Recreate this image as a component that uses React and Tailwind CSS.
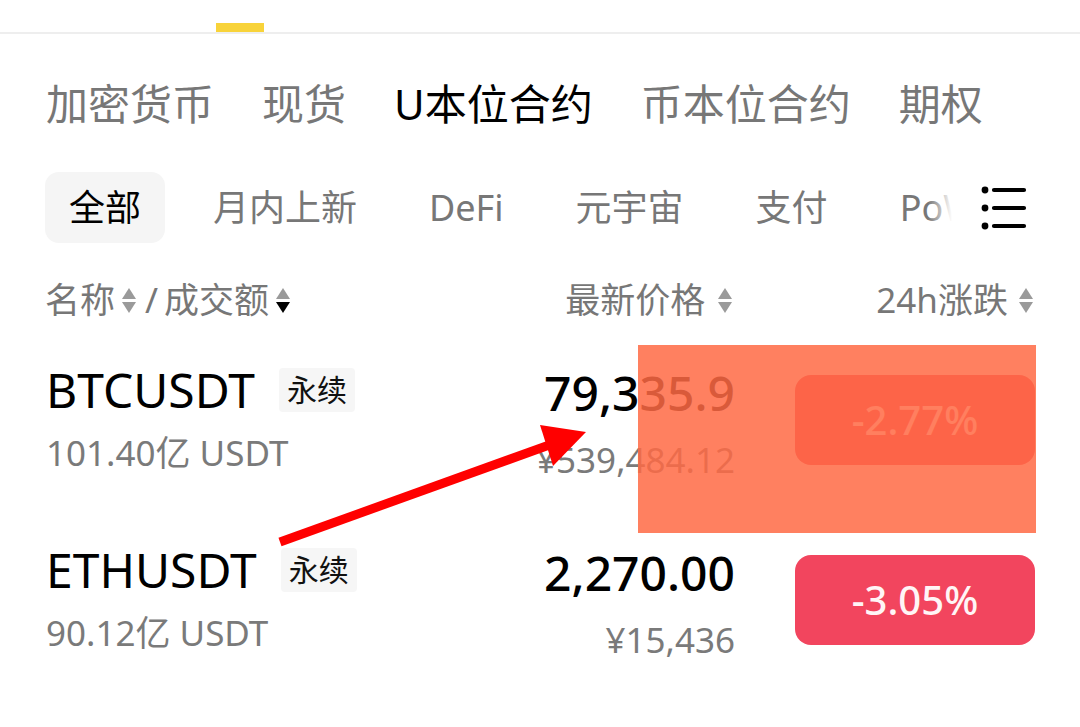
import React from "react";

const FONT = { fontFamily: '"Noto Sans", "Noto Sans CJK SC", sans-serif' };

function SortIcon({ active }) {
  return (
    <svg width="16" height="32" viewBox="0 0 16 32" className="shrink-0">
      <path d="M8 4 L15 15 L1 15 Z" fill="#9a9a9a" />
      <path d="M1 18 L15 18 L8 29 Z" fill={active ? "#000" : "#9a9a9a"} />
    </svg>
  );
}

function MenuIcon() {
  return (
    <svg width="50" height="46" viewBox="0 0 50 46" className="shrink-0">
      <circle cx="5" cy="5" r="3.4" fill="#000" />
      <circle cx="5" cy="23" r="3.4" fill="#000" />
      <circle cx="5" cy="41" r="3.4" fill="#000" />
      <path d="M14 5 H44 M14 23 H44 M14 41 H44" stroke="#000" strokeWidth="4.2" strokeLinecap="round" />
    </svg>
  );
}

function Row({ name, vol, price, cny, change }) {
  return (
    <div className="flex items-center h-[180px] pl-[46px] pr-[45px]">
      <div className="flex-1 flex flex-col pb-[4px]">
        <div className="flex items-center gap-[24px]">
          <span className="text-[48px] leading-[56px] text-black">{name}</span>
          <span className="text-[30px] leading-[44px] px-[8px] bg-[#f6f6f6] rounded-[4px] text-[#111]">永续</span>
        </div>
        <span className="text-[35px] leading-[42px] mt-[14px] text-[#7a7a7a]">{vol}</span>
      </div>
      <div className="flex flex-col items-end pt-[6px]">
        <span className="text-[48px] leading-[56px] font-medium text-black">{price}</span>
        <span className="text-[35px] leading-[42px] mt-[18px] text-[#7a7a7a]">{cny}</span>
      </div>
      <div className="ml-[60px] w-[240px] h-[90px] rounded-[16px] bg-[#f2455e] flex items-center justify-center">
        <span className="text-[40px] font-medium text-[#fff5f6]">{change}</span>
      </div>
    </div>
  );
}

export default function App() {
  const cats = ["月内上新", "DeFi", "元宇宙", "支付", "PoW"];
  return (
    <div className="w-[1080px] h-[727px] bg-white relative overflow-hidden" style={FONT}>
      {/* top indicator */}
      <div className="h-[23px]" />
      <div className="h-[9px] flex">
        <div className="ml-[216px] w-[48px] h-[9px] bg-[#f8d33a]" />
      </div>
      <div className="h-[2px] bg-[#eeeeee]" />

      {/* main tabs */}
      <div className="h-[138px] flex items-center gap-[48px] pl-[46px] text-[42px] text-[#777777]">
        <span>加密货币</span>
        <span>现货</span>
        <span className="text-black">U本位合约</span>
        <span>币本位合约</span>
        <span>期权</span>
      </div>

      {/* categories */}
      <div className="h-[71px] flex items-center pl-[45px] pr-[50px]">
        <div className="flex-1 relative overflow-hidden flex items-center">
          <div className="flex items-center gap-[24px] text-[36px] text-[#777777] whitespace-nowrap">
            <span className="h-[71px] px-[24px] flex items-center bg-[#f5f5f5] rounded-[14px] text-black">全部</span>
            {cats.map((c) => (
              <span key={c} className="px-[24px]">{c}</span>
            ))}
          </div>
          <div className="absolute right-0 top-0 bottom-0 w-[24px] bg-gradient-to-r from-transparent to-white" />
        </div>
        <div className="ml-[28px]">
          <MenuIcon />
        </div>
      </div>

      {/* header */}
      <div className="mt-[27px] h-[60px] flex items-center pl-[45px] pr-[46px] text-[35px] text-[#777777]">
        <div className="flex-1 flex items-center">
          <span>名称</span>
          <span className="ml-[6px]"><SortIcon /></span>
          <span className="ml-[8px] mr-[6px]">/</span>
          <span>成交额</span>
          <span className="ml-[6px]"><SortIcon active /></span>
        </div>
        <div className="flex items-center">
          <span>最新价格</span>
          <span className="ml-[12px]"><SortIcon /></span>
        </div>
        <div className="ml-[143px] flex items-center">
          <span>24h涨跌</span>
          <span className="ml-[10px]"><SortIcon /></span>
        </div>
      </div>

      <Row name="BTCUSDT" vol="101.40亿 USDT" price="79,335.9" cny="¥539,484.12" change="-2.77%" />
      <Row name="ETHUSDT" vol="90.12亿 USDT" price="2,270.00" cny="¥15,436" change="-3.05%" />

      {/* annotation overlay */}
      <div className="absolute left-[638px] top-[345px] w-[398px] h-[188px] bg-[rgba(255,106,68,0.85)]" />
      <svg className="absolute left-0 top-0" width="1080" height="727" viewBox="0 0 1080 727">
        <line x1="280" y1="542" x2="552" y2="444" stroke="#ff0000" strokeWidth="9" />
        <polygon points="540,425 586,432 553,466" fill="#ff0000" />
      </svg>
    </div>
  );
}
